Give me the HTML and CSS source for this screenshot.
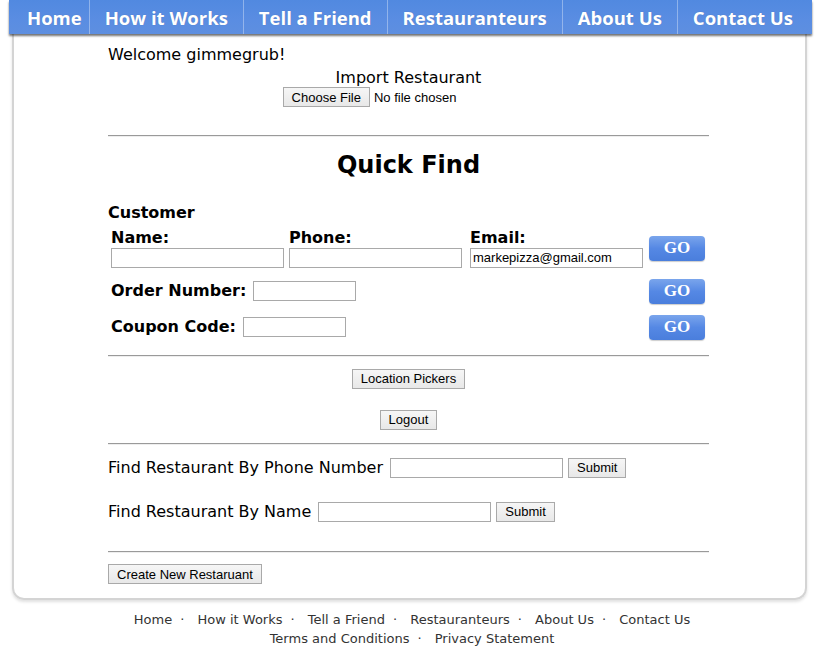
FILE: index.html
```html
<!DOCTYPE html>
<html lang="en">
<head>
  <meta charset="UTF-8" />
  <title>GimmeGrub - Admin</title>
  <link rel="stylesheet" href="styles.css">
</head>
<body>
  <div class="page">
    <nav class="topnav">
      <a href="#" class="first">Home</a>
      <a href="#">How it Works</a>
      <a href="#">Tell a Friend</a>
      <a href="#">Restauranteurs</a>
      <a href="#">About Us</a>
      <a href="#">Contact Us</a>
    </nav>

    <div class="box">
      <div class="content">
        <div class="welcome">Welcome gimmegrub!</div>
        <div class="import">Import Restaurant</div>
        <div class="file-row">
          <button class="btn">Choose File</button>
          <span class="file-name">No file chosen</span>
        </div>

        <hr class="rule first-rule">

        <h1>Quick Find</h1>

        <div class="customer">Customer</div>
        <div class="qf-grid">
          <div class="field">
            <label>Name:</label>
            <input type="text" class="txt wide">
          </div>
          <div class="field">
            <label>Phone:</label>
            <input type="text" class="txt wide">
          </div>
          <div class="field">
            <label>Email:</label>
            <input type="text" class="txt wide" value="markepizza@gmail.com">
          </div>
          <div class="go-cell"><button class="go">GO</button></div>

          <div class="inline-field">
            <label>Order Number:</label>
            <input type="text" class="txt short">
          </div>
          <div class="go-cell"><button class="go">GO</button></div>

          <div class="inline-field">
            <label>Coupon Code:</label>
            <input type="text" class="txt short">
          </div>
          <div class="go-cell"><button class="go">GO</button></div>
        </div>

        <hr class="rule rule-mid">

        <div class="center-btn"><button class="btn">Location Pickers</button></div>
        <div class="center-btn logout"><button class="btn">Logout</button></div>

        <hr class="rule rule-low">

        <div class="find-row">
          <span>Find Restaurant By Phone Number</span>
          <input type="text" class="txt wide">
          <button class="btn">Submit</button>
        </div>
        <div class="find-row second">
          <span>Find Restaurant By Name</span>
          <input type="text" class="txt wide">
          <button class="btn">Submit</button>
        </div>

        <hr class="rule rule-last">

        <button class="btn">Create New Restaruant</button>
      </div>
    </div>

    <footer class="foot">
      <div>
        <a href="#">Home</a><span class="dot">·</span>
        <a href="#">How it Works</a><span class="dot">·</span>
        <a href="#">Tell a Friend</a><span class="dot">·</span>
        <a href="#">Restauranteurs</a><span class="dot">·</span>
        <a href="#">About Us</a><span class="dot">·</span>
        <a href="#">Contact Us</a>
      </div>
      <div>
        <a href="#">Terms and Conditions</a><span class="dot">·</span>
        <a href="#">Privacy Statement</a>
      </div>
    </footer>
  </div>
</body>
</html>
```

FILE: styles.css
```css
body {
  margin: 0;
  padding: 0;
  background: #ffffff;
  color: #000;
  font-family: "DejaVu Sans", Verdana, sans-serif;
  font-size: 16px;
}

.page {
  width: 803px;
  margin-left: 9px;
}

/* top navigation */
.topnav {
  position: relative;
  z-index: 2;
  display: flex;
  height: 34px;
  background: linear-gradient(#5189e0, #5a8de2 60%, #5e8fe0);
  box-shadow: 0 2px 2px rgba(0, 0, 0, 0.55);
}

.topnav a {
  flex: none;
  display: flex;
  align-items: center;
  justify-content: center;
  padding: 0 15px;
  white-space: nowrap;
  color: #fff;
  text-decoration: none;
  font-family: "Open Sans", sans-serif;
  font-weight: 700;
  font-size: 18.5px;
  border-right: 1px solid rgba(255, 255, 255, 0.35);
  text-shadow: 0 0 1px rgba(0, 0, 0, 0.2);
}

.topnav a.first {
  padding-left: 18px;
  padding-right: 7px;
}

.topnav a:last-child {
  border-right: none;
}

/* white box */
.box {
  margin: 0 5px 0 3px;
  border: 2px solid #d4d4d4;
  border-top: none;
  border-radius: 0 0 12px 12px;
  box-shadow: 0 2px 3px rgba(0, 0, 0, 0.12);
  padding-bottom: 14px;
}

.content {
  width: 601px;
  margin-left: 94px;
}

.welcome {
  padding-top: 11px;
  line-height: 20px;
}

.import {
  margin-top: 3px;
  line-height: 19px;
  text-align: center;
}

.file-row {
  display: flex;
  align-items: center;
  justify-content: center;
  gap: 4px;
  padding-right: 78px;
}

.file-name {
  font-family: "Liberation Sans", Arial, sans-serif;
  font-size: 13px;
}

.rule {
  border: none;
  border-top: 1px solid #9a9a9a;
  border-bottom: 1px solid #eeeeee;
  margin: 0;
}

.first-rule { margin-top: 28px; }

h1 {
  margin: 13px 0 0;
  font-size: 24px;
  line-height: 30px;
  text-align: center;
}

.customer {
  margin-top: 23px;
  font-weight: bold;
  line-height: 20px;
}

/* quick find grid */
.qf-grid {
  display: grid;
  grid-template-columns: 178px 181px 179px 1fr;
  row-gap: 11px;
  margin-top: 6px;
  padding-left: 3px;
}

.field label,
.inline-field label {
  display: block;
  font-weight: bold;
  font-size: 16px;
  line-height: 18px;
}

.inline-field {
  grid-column: 1 / span 3;
  display: flex;
  align-items: center;
  gap: 7px;
}

.go-cell {
  display: flex;
  align-items: center;
}

.go {
  width: 56px;
  height: 25px;
  padding: 0;
  border: none;
  border-radius: 4px;
  background: linear-gradient(#7aa5ec, #5588e4 50%, #4a7edc);
  box-shadow: 0 1px 1px rgba(0, 0, 0, 0.2);
  color: #fff;
  font-family: "Liberation Serif", "Times New Roman", serif;
  font-weight: bold;
  font-size: 17px;
}

.txt {
  box-sizing: border-box;
  height: 20px;
  border: 1px solid #a9a9a9;
  padding: 0 2px;
  font-family: "Liberation Sans", Arial, sans-serif;
  font-size: 13px;
}

.txt.wide { width: 173px; }
.txt.short { width: 103px; }

.btn {
  box-sizing: border-box;
  height: 20px;
  padding: 0 8px;
  border: 1px solid #a9a9a9;
  border-radius: 0;
  background: linear-gradient(#f6f6f6, #e8e8e8);
  color: #000;
  font-family: "Liberation Sans", Arial, sans-serif;
  font-size: 13px;
}

.rule-mid { margin-top: 15px; }

.center-btn {
  display: flex;
  justify-content: center;
  margin-top: 12px;
}

.center-btn.logout { margin-top: 21px; }

.rule-low { margin-top: 13px; }

.find-row {
  display: flex;
  align-items: center;
  gap: 5px;
  margin-top: 13px;
  line-height: 20px;
}

.find-row span { margin-right: 2px; }

.find-row.second { margin-top: 24px; }

.rule-last {
  margin-top: 29px;
  margin-bottom: 11px;
}

/* footer */
.foot {
  margin-top: 10px;
  margin-left: -12px;
  width: 830px;
  text-align: center;
  font-size: 13px;
  line-height: 19px;
  color: #333;
}

.foot a {
  color: #333;
  text-decoration: none;
}

.dot {
  margin: 0 9px 0 8px;
}
```
